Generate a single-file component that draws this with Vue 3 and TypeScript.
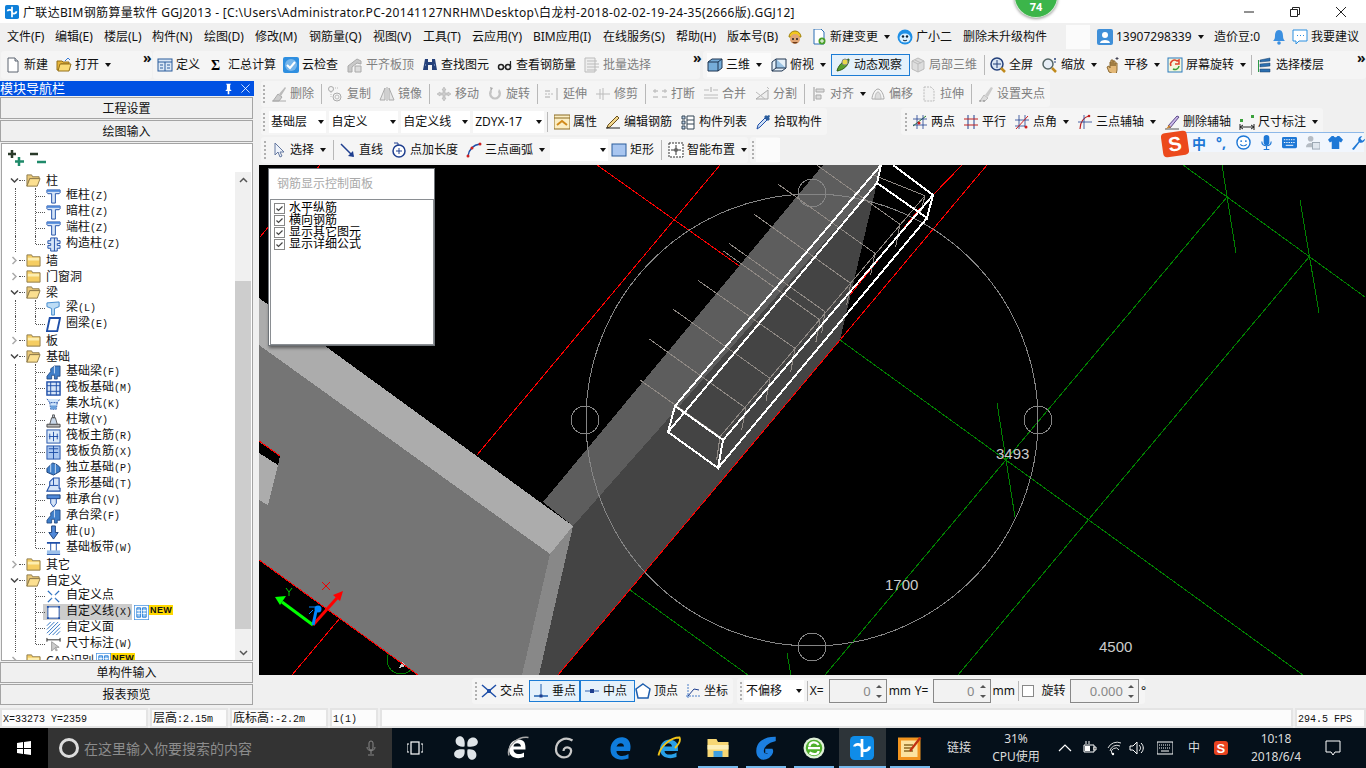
<script setup lang="ts">
import { h } from 'vue'

const icons: Record<string, string> = {
  app: '<rect x="0" y="0" width="16" height="16" rx="2" fill="#0f7fd8"/><path d="M8 2v12M3 7c0-2 5-2 5 1s5 2 5-1" fill="none" stroke="#fff" stroke-width="2"/>',
  newdoc: '<path d="M3 1h7l3 3v11H3z" fill="#fff" stroke="#5c6470"/><path d="M10 1v3h3" fill="#d8dde4" stroke="#5c6470"/>',
  open: '<path d="M1 4h5l1 1h6v2H5L3 13H1z" fill="#e6b53a" stroke="#94701a"/><path d="M4 7h11l-2 7H2z" fill="#fbdc76" stroke="#94701a"/><path d="M9 4l3-3 2 2" fill="none" stroke="#3a7bd5"/>',
  define: '<rect x="1" y="2" width="14" height="12" fill="#dce8f5" stroke="#2a5d9c"/><path d="M1 5h14M8 5v9M3 8h3M3 11h3M10 8h3M10 11h3" stroke="#2a5d9c"/>',
  sigma: '<text x="2" y="13" font-size="14" font-weight="700" font-family="Liberation Serif">Σ</text>',
  cloud: '<rect x="0" y="0" width="16" height="16" rx="2" fill="#2f8fe0"/><circle cx="8" cy="8" r="6" fill="#fff" opacity=".35"/><path d="M4 8l3 3 5-6" stroke="#fff" stroke-width="2" fill="none"/>',
  flush: '<path d="M1 9l9-7 4 2v3l-4-1-5 4v5H1z" fill="#c9c9c9" stroke="#aaa"/><path d="M8 9h6v6H8z" fill="#ddd" stroke="#aaa"/>',
  find: '<path d="M3 2h3v3h4V2h3l2 11h-5V8H6v5H1z" fill="#24407a"/><path d="M3 8h1M12 8h1" stroke="#9db8e0"/>',
  glasses: '<circle cx="4" cy="10" r="2.5" fill="none" stroke="#222" stroke-width="1.5"/><circle cx="11" cy="10" r="2.5" fill="none" stroke="#222" stroke-width="1.5"/><path d="M6 10h3M13.500 10V4" stroke="#222" stroke-width="1.2"/>',
  batch: '<path d="M1 1h10v14H1z" fill="#eee" stroke="#bbb"/><path d="M3 4h10M3 7h12M3 10h12M3 13h10" stroke="#bbb"/>',
  cube: '<path d="M1 5l4-3h10v9l-4 3H1z" fill="#76add9" stroke="#1f3550"/><path d="M1 5h10v9M11 5l4-3" fill="none" stroke="#1f3550"/>',
  topview: '<path d="M1 5l4-3h10v9l-4 3H1z" fill="#e6f0f8" stroke="#1f3550"/><path d="M5 2v9h10M5 11l-4 3" fill="#9cc3e3" stroke="#1f3550"/>',
  orbit: '<path d="M2 14C3 9 8 3 14 2c0 6-5 11-12 12z" fill="#5aa02c" stroke="#2c5a12"/><circle cx="10" cy="5" r="3" fill="#e8d84a" stroke="#888"/>',
  cube3: '<path d="M8 1l6 3v8l-6 3-6-3V4z" fill="#ddd" stroke="#bbb"/><path d="M2 4l6 3 6-3M8 7v8M5 3l6 3" fill="none" stroke="#bbb"/>',
  full: '<circle cx="7" cy="7" r="6" fill="#dbe7f5" stroke="#24407a" stroke-width="1.500"/><path d="M7 3v8M3 7h8" stroke="#24407a"/><path d="M11 11l4 4" stroke="#c08a1c" stroke-width="2.500"/>',
  zoom: '<circle cx="6" cy="7" r="5" fill="#e7eef7" stroke="#566" stroke-width="1.500"/><path d="M10 11l4 4" stroke="#c08a1c" stroke-width="2.500"/><path d="M12 2h2M13 1v2M12 5h2" stroke="#24407a"/>',
  pan: '<path d="M4 15l-2-5 2-1 1 2V5h1v4-6h2v6-5h2v5-3h2v7l-1 5z" fill="#e3b877" stroke="#8b6a34"/><path d="M12 0v3M10.500 1.500h3" stroke="#445"/>',
  rotate: '<rect x="1" y="1" width="14" height="14" fill="#f4f7dd" stroke="#2a7bbd"/><path d="M4 9a4 4 0 0 1 6-5l2-1v4H8" fill="none" stroke="#e0452a" stroke-width="1.500"/><path d="M12 9a4 4 0 0 1-6 3" fill="none" stroke="#35a035" stroke-width="1.500"/>',
  floors: '<path d="M3 3l10-2v3L3 5zM3 7l10-1v3L3 10zM3 12h10v3H3z" fill="#2b6fb0" stroke="#1a3f66" stroke-width=".5"/><path d="M1 3h1v12H1z" fill="#2e9a48"/>',
  del: '<path d="M2 15l5-7 4 3-3 4z" fill="#ccc" stroke="#aaa"/><path d="M8 8l6-7 1 1-5 8z" fill="#bbb"/><path d="M1 15h14" stroke="#aaa"/>',
  copy: '<circle cx="3" cy="3" r="2.500" fill="none" stroke="#aaa"/><circle cx="9" cy="11" r="4" fill="none" stroke="#aaa"/><circle cx="9" cy="11" r="2" fill="none" stroke="#bbb"/><path d="M5 2h6M3 6v5" stroke="#bbb" stroke-dasharray="1 1"/>',
  mirror: '<path d="M1 14L6 2v12zM15 14L10 2v12z" fill="#e6e6e6" stroke="#aaa"/><path d="M8 1v14" stroke="#aaa"/>',
  move: '<path d="M8 1l2 3H9v3h3V6l3 2-3 2V9H9v3h1l-2 3-2-3h1V9H4v1L1 8l3-2v1h3V4H6z" fill="#ccc" stroke="#aaa" stroke-width=".5"/>',
  rot2: '<path d="M4 3a6 6 0 1 0 8 0l-1 3a3.500 3.500 0 1 1-6 0z" fill="#c4c4c4"/><path d="M3 1l3 1-2 3z" fill="#aaa"/>',
  extend: '<path d="M1 8h8" stroke="#bbb" stroke-dasharray="2 1"/><path d="M13 2v12M1 5h5M1 11h5" stroke="#aaa"/>',
  trim: '<path d="M1 8h14M8 2v12M5 3v10" stroke="#bbb"/>',
  brk: '<path d="M1 5h5M10 5h5M1 11h5M10 11h5" stroke="#aaa"/><path d="M3 3v4M13 3v4" stroke="#bbb"/>',
  merge: '<path d="M1 4h5M10 4h5M1 12h14M1 9h14" stroke="#bbb"/><path d="M8 1v5" stroke="#aaa"/>',
  split: '<path d="M2 13h12V4L2 13z" fill="#eee" stroke="#aaa"/><path d="M2 6l9 7M13 1l2 2" stroke="#bbb"/>',
  align: '<path d="M3 1v14" stroke="#999"/><path d="M5 3h8v3H5zM5 9h5v4H5z" fill="#ddd" stroke="#aaa"/>',
  offset: '<path d="M2 13c0-4 3-10 6-10s6 6 6 10z" fill="none" stroke="#aaa"/><path d="M5 13c0-3 1-7 3-7s3 4 3 7z" fill="#ddd" stroke="#bbb"/>',
  stretch: '<path d="M3 1h7l3 3v11H3z" fill="#f3f3f3" stroke="#bbb" stroke-dasharray="2 1"/>',
  grip: '<path d="M2 15l4-6 4 3-3 3z" fill="#ddd" stroke="#bbb"/><path d="M7 9l6-8 2 1-5 9z" fill="#ccc"/><path d="M1 15h2M5 15h2" stroke="#888"/>',
  attr: '<rect x="0" y="1" width="16" height="14" fill="#fbeec4" stroke="#8a6a22"/><path d="M0 4h16" stroke="#8a6a22"/><path d="M3 11l5-4 5 4" fill="none" stroke="#d08a1c" stroke-width="2"/>',
  edit: '<path d="M3 11l9-9 2 2-9 9-3 1z" fill="#f2d68a" stroke="#6a5120"/><path d="M1 14h14" stroke="#222"/>',
  list: '<path d="M2 2h3v3H2zM2 7h3v3H2zM2 12h3v3H2z" fill="#bcd0e8" stroke="#345"/><path d="M7 2h7v13H7z" fill="#fff" stroke="#345"/><path d="M7 6h7M7 10h7" stroke="#345"/>',
  pick: '<path d="M2 15l1-4 7-7 2 2-7 7z" fill="#cfe0f5" stroke="#1f4fa8"/><path d="M9 3l2-2 1 1 2-1 1 1-1 2 1 1-2 2z" fill="#2a5d9c"/>',
  twop: '<path d="M1 12l13-10" stroke="#2a7d2a"/><path d="M5 1v14M11 1v14M1 5h14M1 11h14" stroke="#1f3f8f" stroke-width=".8"/><circle cx="7" cy="9" r="1.500" fill="#d02020"/>',
  para: '<path d="M5 1v14M11 1v14" stroke="#1f3f8f"/><path d="M1 5h14M1 11h14" stroke="#c02020"/>',
  angle: '<path d="M5 1v14M11 1v12M1 6h14M1 12h10" stroke="#1f3f8f" stroke-width=".8"/><path d="M2 15L14 2" stroke="#d02020"/><circle cx="12" cy="13" r="1.500" fill="#d02020"/>',
  arc3: '<path d="M3 15c0-7 4-12 9-13" fill="none" stroke="#c02020" stroke-width="1.200"/><path d="M7 1v14M1 8h14" stroke="#1f3f8f" stroke-width=".8"/><circle cx="12" cy="2" r="1.300" fill="#c02020"/>',
  delaxis: '<path d="M1 15h14" stroke="#555"/><path d="M4 12l9-10 2 1-9 11z" fill="#cbb7e8" stroke="#5b4a8a"/><path d="M2 15l3-4 2 2z" fill="#d0872a"/>',
  dim: '<path d="M1 13h14M1 10v6M15 10v6M4 11l-3 2 3 2M12 11l3 2-3 2" fill="none" stroke="#222"/><rect x="1" y="5" width="3" height="3" fill="#3aa03a"/><rect x="12" y="1" width="3" height="3" fill="#3aa03a"/>',
  arrow: '<path d="M4 1v12l3-3 2 5 2-1-2-4h4z" fill="#eef3fb" stroke="#6478a0"/>',
  line: '<path d="M1 2l12 12" stroke="#1f3f8f" stroke-width="1.500"/><path d="M14 15l-6-1 5-5z" fill="#1f3f8f"/>',
  ptlen: '<circle cx="8" cy="9" r="6" fill="#fff" stroke="#1f3f8f" stroke-width="1.500"/><path d="M8 6v6M5 9h6" stroke="#1f3f8f"/><path d="M3 1h4v3" fill="none" stroke="#1f3f8f"/>',
  arc: '<path d="M2 14C3 8 7 3 14 2" fill="none" stroke="#1f4fa8" stroke-width="1.500"/><circle cx="2" cy="14" r="1.500" fill="#d02020"/><circle cx="6" cy="6" r="1.500" fill="#d02020"/><circle cx="14" cy="2" r="1.500" fill="#d02020"/>',
  rect: '<rect x="1" y="2" width="14" height="12" fill="#a9c6f0" stroke="#2a5d9c"/>',
  smart: '<rect x="1" y="1" width="14" height="14" fill="#fff" stroke="#333" stroke-dasharray="2 1"/><path d="M8 3v10M3 8h10" stroke="#333"/><circle cx="8" cy="8" r="2" fill="#666"/>',
  worker: '<path d="M2 8a6 6 0 0 1 12 0z" fill="#f2c81e" stroke="#a0820c"/><circle cx="8" cy="10" r="5" fill="#e0a574"/><circle cx="6" cy="10" r="1" fill="#222"/><circle cx="10" cy="10" r="1" fill="#222"/><path d="M5 13c2 2 4 2 6 0" fill="#6a3a1a"/>',
  change: '<path d="M3 0h7l3 3v12H3z" fill="#fff" stroke="#2a6fb5"/><circle cx="11" cy="12" r="3.500" fill="#4aa02a"/><path d="M11 10v4M9 12h4" stroke="#fff"/>',
  bot: '<circle cx="8" cy="8" r="7.500" fill="#1e8fe6"/><ellipse cx="8" cy="9" rx="5.500" ry="4.500" fill="#d9f0ff"/><circle cx="6" cy="7.500" r="1.200" fill="#123"/><circle cx="10" cy="7.500" r="1.200" fill="#123"/><path d="M6 11c1 1 3 1 4 0" stroke="#123" fill="none"/>',
  user: '<rect x="0" y="0" width="16" height="16" rx="2" fill="#3f8fd8"/><circle cx="8" cy="6" r="3" fill="#fff"/><path d="M3 14c0-4 10-4 10 0z" fill="#fff"/>',
  bell: '<path d="M8 1c3 0 4 3 4 6s1 4 2 5H2c1-1 2-2 2-5s1-6 4-6z" fill="#3a8fe0"/><circle cx="8" cy="14" r="1.800" fill="#3a8fe0"/>',
  chat: '<path d="M1 1h14v11H7l-3 3v-3H1z" fill="#fff" stroke="#2a8fe0"/><path d="M5 6.500h1M8 6.500h1M11 6.500h1" stroke="#2a8fe0"/>',
  cross: '<path d="M1 2l14 12M15 2L1 14" stroke="#1f4fa8" stroke-width="1.500"/><rect x="6" y="6" width="4" height="4" fill="#1f4fa8"/>',
  perp: '<path d="M1 13h14" stroke="#1f5fae" stroke-width="1.500"/><path d="M8 1v13" stroke="#1f5fae"/><rect x="6.500" y="11.500" width="3" height="3" fill="#1f3f8f"/>',
  mid: '<path d="M1 8h14" stroke="#6a8fc8" stroke-width="1.500"/><rect x="6" y="6" width="4" height="4" fill="#1f3f8f"/>',
  vertex: '<path d="M8 1l7 5-2 9H3L1 6z" fill="#fff" stroke="#1f5fae" stroke-width="1.500"/>',
  coord: '<path d="M3 1v14M1 13h14" stroke="#4a7fc8" stroke-dasharray="2 1"/><path d="M3 13l6-7 5 1" fill="none" stroke="#1f3f8f"/>',
  fclosed: '<path d="M1 2h5l1 2h8v10H1z" fill="#f5cd62" stroke="#8e7a4a"/><path d="M2 5h12v3H2z" fill="#fdeeb0"/>',
  fopen: '<path d="M1 2h5l1 2h7v2H4l-3 8z" fill="#e9c878" stroke="#8e7a4a"/><path d="M4 6h11l-3 8H1z" fill="#fbdf90" stroke="#8e7a4a"/>',
  tcol: '<path d="M1 1h14v3l-1 1h-4v10H6V5H2L1 4z" fill="#d5e4f7" stroke="#1f4fa8"/><path d="M1 1h14v2H1z" fill="#4f88d8"/>',
  gzz: '<path d="M5 1h7v3h3v3h-3v2h3v3h-3v3H5v-3H2V9h3V7H2V4h3z" fill="#d5e4f7" stroke="#1f4fa8"/><path d="M9 1v14" stroke="#1f4fa8"/>',
  beam: '<path d="M1 2l13-1v5L9 8v7H6V8L1 6z" fill="#bcdcf5" stroke="#3f88cc"/>',
  ring: '<path d="M4 1h11l-3 14H1z" fill="#fff" stroke="#1f4fa8" stroke-width="2"/>',
  fbeam: '<path d="M1 15v-3l4-5V4l4-3h6v11h-3v3h-3v-4H6v4z" fill="#3f7ec8" stroke="#1a3f78" stroke-width=".8"/><path d="M9 1v8" stroke="#cfe0f5"/>',
  raft: '<rect x="1" y="1" width="14" height="14" fill="#d5e4f7" stroke="#1f4fa8" stroke-width="1.500"/><path d="M1 5h14M1 11h14M5 1v14M11 1v14" stroke="#1f4fa8"/>',
  pit: '<path d="M1 2l3 4h8l3-4M4 6l1 7h6l1-7" fill="#cfe4fa" stroke="#1f4fa8" stroke-dasharray="2 1"/><path d="M5 9h6v4H5z" fill="#6aa0dc"/>',
  pier: '<path d="M1 12h14v3H1z" fill="#bbb" stroke="#444"/><path d="M6 5h4l2 7H4zM7 2h2v3H7z" fill="#c9d8ea" stroke="#555"/>',
  rmain: '<rect x="1" y="1" width="14" height="14" fill="#dceaf9" stroke="#1f4fa8"/><path d="M8 3v10M3 8h10M4 5v6M12 5v6" stroke="#1f4fa8"/>',
  rneg: '<rect x="1" y="1" width="14" height="14" fill="#a9c6f0" stroke="#1f4fa8"/><path d="M3 4h10M3 8h10M8 1v14" stroke="#1f4fa8"/>',
  iso: '<path d="M1 8l6-6 5 2 3 3v4l-7 4-7-3z" fill="#3f7ec8" stroke="#1a3f78"/><path d="M5 3v9M10 3v10" stroke="#cfe0f5"/>',
  strip: '<path d="M1 15l3-6V5l4-4h6v11h1v3z" fill="#d5e4f7" stroke="#1f4fa8" stroke-width="1.200"/><path d="M4 9h9M8 1v8" stroke="#1f4fa8"/>',
  cap: '<path d="M1 2h14v4H1z" fill="#4f88d8" stroke="#1a3f78"/><path d="M5 6h6v5l-3 4-3-4z" fill="#d5e4f7" stroke="#1f4fa8"/>',
  pile: '<path d="M6 1h4v7h3l-5 7-5-7h3z" fill="#4f88d8" stroke="#1a3f78"/>',
  band: '<path d="M1 2h14M1 14h14" stroke="#1f4fa8" stroke-width="2"/><path d="M5 2v12M11 2v12" stroke="#1f4fa8"/><path d="M1 10h14v4H1z" fill="#9cc0ea"/>',
  cpoint: '<path d="M2 2l12 12M14 2L2 14" stroke="#2a6fc0" stroke-width="1.500"/><rect x="6" y="6" width="4" height="4" fill="#fff"/>',
  cline: '<rect x="2" y="2" width="12" height="12" fill="#fff" stroke="#1f4fa8"/><path d="M1 1h2v2H1zM13 1h2v2h-2zM1 13h2v2H1zM13 13h2v2h-2z" fill="#1f4fa8"/>',
  cface: '<path d="M1 5l4-4M1 9l8-8M1 13L13 1M3 15L15 3M7 15l8-8M11 15l4-4" stroke="#2a6fc0"/>',
  cdim: '<path d="M1 1v4M15 1v4M1 3h14" stroke="#222"/><path d="M6 5v10l3-3 2 3 1-1-2-3h4z" fill="#ccc" stroke="#999"/>',
  grid: '<rect x="0" y="0" width="16" height="16" fill="#fff" stroke="#3f8fe0" stroke-width="1.500"/><path d="M3 3h4v10H3zM9 3h4v10H9z" fill="#9cc8f2" stroke="#2a7fd8"/><path d="M3 6h4M3 9h4M9 6h4M9 9h4" stroke="#fff"/>',
  plus: '<path d="M4 0v8M0 4h8" stroke="#2a3a2a" stroke-width="2.500"/><path d="M11 7v9M7 11.500h9" stroke="#1f8a6a" stroke-width="2.500"/>',
  minus: '<path d="M0 4h8" stroke="#2a3a2a" stroke-width="2.500"/><path d="M7 12h9" stroke="#1f8a6a" stroke-width="2.500"/>',
  pin: '<path d="M5 2h6v1h-1v6l2 2H9v4H7v-4H4l2-2V3H5z" fill="#fff"/>',
  close: '<path d="M3 3l10 10M13 3L3 13" stroke="#fff" stroke-width="1"/>',
  win: '<path d="M1 3l6-1v6H1zM8 2l7-1v7H8zM1 9h6v5l-6-1zM8 9h7v6l-7-1z" fill="#fff"/>',
  mic: '<rect x="6" y="1" width="4" height="9" rx="2" fill="none" stroke="#888"/><path d="M4 7c0 5 8 5 8 0M8 11v3M5 15h6" fill="none" stroke="#888"/>',
  view: '<rect x="4" y="2" width="8" height="12" fill="none" stroke="#fff" stroke-width="1.200"/><path d="M2 4H0v8h2M14 4h2v8h-2" fill="none" stroke="#fff"/>',
  pinw: '<path d="M7 7C1 8 0 3 2 1s6-1 5 6zM9 7c-1-6 4-7 6-5s1 6-6 5zM9 9c6-1 7 4 5 6s-6 1-5-6zM7 9c1 6-4 7-6 5s-1-6 6-5z" fill="#dfe4e8"/>',
  ewhite: '<path d="M13 9H5c0 3 4 4 7 2v3c-5 2-10 0-10-5 0-6 6-8 9-6 2 1 2 4 2 6zM5 7h5c0-3-5-3-5 0z" fill="#fff"/><path d="M2 13C0 7 8 0 15 1" fill="none" stroke="#aaa"/>',
  spiral: '<path d="M13 3C8 0 2 3 2 9c0 4 4 6 7 5s4-5 2-6-4 0-4 2" fill="none" stroke="#c8c8c8" stroke-width="1.500"/>',
  edge: '<path d="M14 10H5c0 4 5 4 8 2v3C7 17 1 15 1 9 1 3 6 0 10 1c4 1 5 5 4 9zM5 7h5c0-3-4-3-5 0z" fill="#0f7cdc"/>',
  ie: '<path d="M14 10H5c0 3 5 3 8 1v3C8 16 2 14 2 9c0-5 5-8 9-6 3 1 3 4 3 7zM5 7h5c0-3-5-3-5 0z" fill="#28a0e8"/><path d="M1 13C2 7 9 1 15 1c1 2-1 5-3 7" fill="none" stroke="#f2c418" stroke-width="1.200"/>',
  folder: '<path d="M1 2h6l1 2h7v10H1z" fill="#f7d774"/><path d="M1 6h14v3H1z" fill="#fdf0b8"/><path d="M5 10h6v4H5z" fill="#3f9fe0"/>',
  gbue: '<path d="M14 1C6 1 2 5 2 10c0 4 3 6 6 5s5-4 4-6H8v2h2c0 2-4 2-4-1 0-3 3-6 8-7z" fill="#1c7fe0" stroke="#1c7fe0"/>',
  ggreen: '<circle cx="8" cy="8" r="7" fill="#dff0d8"/><circle cx="8" cy="8" r="5.500" fill="#4fb02c"/><path d="M4 8h8M5 11c3 2 6 1 6-1M11 6c-2-3-6-2-6 1" fill="none" stroke="#fff" stroke-width="1.500"/>',
  gapp: '<rect x="0" y="0" width="16" height="16" rx="3" fill="#0f8ce8"/><path d="M8 2v12M3 7c0-2 5-2 5 1s5 2 5-1" fill="none" stroke="#fff" stroke-width="1.800"/>',
  note: '<rect x="0" y="1" width="15" height="15" fill="#f2941e"/><rect x="2" y="3" width="11" height="11" fill="#fbe3a0"/><path d="M4 6h6M4 8h6M4 10h6" stroke="#8a6a22"/><path d="M8 10l7-9" stroke="#c03010" stroke-width="1.500"/>',
  up: '<path d="M2 11l6-6 6 6" fill="none" stroke="#fff" stroke-width="1.200"/>',
  batt: '<path d="M2 5h10v7H2z" fill="none" stroke="#fff"/><path d="M3 6h5v5H3z" fill="#fff"/><path d="M12 7h2v3h-2zM4 1v3M7 1v3" stroke="#fff"/>',
  wifi: '<path d="M1 8a10 10 0 0 1 13-5M3 11a7 7 0 0 1 10-5M5 14a4 4 0 0 1 7-4" fill="none" stroke="#ddd"/><circle cx="6" cy="14" r="1.200" fill="#fff"/>',
  vol: '<path d="M1 6h3l4-4v12l-4-4H1z" fill="none" stroke="#fff"/><path d="M10 5c2 2 2 4 0 6M12 3c3 3 3 7 0 10" fill="none" stroke="#fff"/>',
  kb: '<rect x="0" y="2" width="16" height="12" fill="none" stroke="#fff"/><path d="M2 5h12M2 8h12" stroke="#fff" stroke-dasharray="1 1"/><path d="M4 11h8" stroke="#fff"/>',
  sogou: '<rect x="1" y="1" width="14" height="14" rx="3" fill="#e8431f"/><text x="3.500" y="13" font-size="13" font-weight="700" fill="#fff" font-family="Liberation Sans">S</text>',
  notif: '<path d="M1 1h14v11h-5l-2 3-2-3H1z" fill="none" stroke="#fff"/>',
}

const Ico = (p: { name: string }) =>
  h('svg', { class: 'ic', viewBox: '0 0 16 16', innerHTML: icons[p.name] || '' })

type Tuple = [number, string, string, string?]
interface Bar { from: number; to: number; items: Tuple[] }

// renders bars of toolbar buttons, x values are page coordinates
const Tools = (p: { bars: Bar[]; origin: number }) => {
  let cur = p.origin
  return p.bars.map((b) => {
    const ml = b.from - cur
    cur = b.to
    const kids = b.items.map((it, n) => {
      const next = n + 1 < b.items.length ? b.items[n + 1][0] : b.to
      const fl = it[3] || ''
      const cls = ['tb']
      if (fl.includes('o')) cls.push('off')
      if (fl.includes('a')) cls.push('act')
      if (fl.includes('b')) cls.push('box')
      if (fl.includes('w')) cls.push('white')
      if (fl.includes('m')) cls.push('more')
      if (fl.includes('s')) cls.push('sep')
      if (fl.includes('k')) cls.push('dots')
      if (fl.includes('n')) cls.push('num')
      if (fl.includes('c')) cls.push('chk')
      const inner: any[] = []
      if (it[1]) inner.push(h(Ico, { name: it[1] }))
      if (it[2]) inner.push(h('span', { class: 'tx' }, it[2]))
      if (fl.includes('d')) inner.push(h('i', { class: 'dd' }))
      if (fl.includes('n')) inner.push(h('i', { class: 'spin' }, [h('b', { class: 'su' }), h('b', { class: 'sd' })]))
      return h('div', { class: cls, style: { width: next - it[0] + 'px' } }, inner)
    })
    const pad = b.items.length ? b.items[0][0] - b.from : 0
    return h('div', { class: 'bar', style: { marginLeft: ml + 'px', width: b.to - b.from + 'px', paddingLeft: pad + 'px' } }, kids)
  })
}

const menuBars: Bar[] = [
  {
    from: 0, to: 1062, items: [
      [7, '', '文件(F)'], [55, '', '编辑(E)'], [104, '', '楼层(L)'], [152, '', '构件(N)'], [204, '', '绘图(D)'],
      [255, '', '修改(M)'], [309, '', '钢筋量(Q)'], [373, '', '视图(V)'], [423, '', '工具(T)'], [472, '', '云应用(Y)'],
      [533, '', 'BIM应用(I)'], [603, '', '在线服务(S)'], [676, '', '帮助(H)'], [727, '', '版本号(B)'],
      [787, 'worker', ''], [811, 'change', '新建变更', 'd'], [897, 'bot', '广小二'], [963, '', '删除未升级构件'],
    ],
  },
  { from: 1066, to: 1090, items: [[1066, '', '', 'w']] },
  {
    from: 1092, to: 1366, items: [
      [1097, 'user', '13907298339', 'd'], [1214, '', '造价豆:0'], [1271, 'bell', ''], [1292, 'chat', '我要建议'],
    ],
  },
]

const row1: Bar[] = [
  { from: 1, to: 152, items: [[5, 'newdoc', '新建'], [56, 'open', '打开', 'd'], [143, '', '»', 'm']] },
  {
    from: 153, to: 700, items: [
      [157, 'define', '定义'], [209, 'sigma', '汇总计算'], [283, 'cloud', '云检查'], [347, 'flush', '平齐板顶', 'o'],
      [422, 'find', '查找图元'], [497, 'glasses', '查看钢筋量'], [584, 'batch', '批量选择', 'o'], [693, '', '»', 'm'],
    ],
  },
  {
    from: 703, to: 1366, items: [
      [707, 'cube', '三维', 'dw'], [771, 'topview', '俯视', 'd'], [831, 'orbit', '动态观察', 'a'], [910, 'cube3', '局部三维', 'o'],
      [984, '', '', 's'], [990, 'full', '全屏'], [1042, 'zoom', '缩放', 'd'], [1105, 'pan', '平移', 'd'],
      [1167, 'rotate', '屏幕旋转', 'd'], [1251, '', '', 's'], [1257, 'floors', '选择楼层'], [1357, '', '»', 'm'],
    ],
  },
]

const row2: Bar[] = [
  {
    from: 261, to: 1050, items: [
      [263, '', '', 'k'], [271, 'del', '删除', 'o'], [321, '', '', 's'], [328, 'copy', '复制', 'o'], [379, 'mirror', '镜像', 'o'],
      [429, '', '', 's'], [436, 'move', '移动', 'o'], [487, 'rot2', '旋转', 'o'], [537, '', '', 's'], [544, 'extend', '延伸', 'o'],
      [595, 'trim', '修剪', 'o'], [645, '', '', 's'], [652, 'brk', '打断', 'o'], [703, 'merge', '合并', 'o'], [754, 'split', '分割', 'o'],
      [804, '', '', 's'], [811, 'align', '对齐', 'do'], [870, 'offset', '偏移', 'o'], [921, 'stretch', '拉伸', 'o'], [971, '', '', 's'],
      [978, 'grip', '设置夹点', 'o'],
    ],
  },
]

const row3: Bar[] = [
  {
    from: 261, to: 827, items: [
      [263, '', '', 'k'], [269, '', '基础层', 'bd'], [329, '', '自定义', 'bd'], [401, '', '自定义线', 'bd'], [473, '', 'ZDYX-17', 'bd'],
      [547, '', '', 's'], [554, 'attr', '属性'], [605, 'edit', '编辑钢筋'], [680, 'list', '构件列表'], [755, 'pick', '拾取构件'],
    ],
  },
  {
    from: 901, to: 1323, items: [
      [905, '', '', 'k'], [912, 'twop', '两点'], [963, 'para', '平行'], [1014, 'angle', '点角', 'd'], [1077, 'arc3', '三点辅轴', 'd'],
      [1164, 'delaxis', '删除辅轴'], [1239, 'dim', '尺寸标注', 'd'],
    ],
  },
]

const row4: Bar[] = [
  {
    from: 261, to: 748, items: [
      [264, '', '', 'k'], [271, 'arrow', '选择', 'd'], [333, '', '', 's'], [340, 'line', '直线'], [391, 'ptlen', '点加长度'],
      [466, 'arc', '三点画弧', 'd'], [550, '', '', 'bd'], [611, 'rect', '矩形'], [661, '', '', 's'], [668, 'smart', '智能布置', 'd'],
    ],
  },
  { from: 750, to: 780, items: [[752, '', '', 'k'], [756, '', '', 'w']] },
]

const snap: Bar[] = [
  {
    from: 472, to: 733, items: [
      [475, '', '', 'k'], [481, 'cross', '交点'], [529, 'perp', '垂点', 'a'], [580, 'mid', '中点', 'a'], [635, 'vertex', '顶点'], [685, 'coord', '坐标'],
    ],
  },
  {
    from: 737, to: 1145, items: [
      [740, '', '', 'k'], [744, '', '不偏移', 'bd'], [806, '', '', 's'], [809, '', 'X='], [828, '', '0', 'n'], [888, '', 'mm'], [914, '', 'Y='],
      [932, '', '0', 'n'], [992, '', 'mm'], [1017, '', '', 's'], [1021, '', '', 'c'], [1041, '', '旋转'], [1069, '', '0.000', 'n'], [1141, '', '°'],
    ],
  },
]

interface Row { label: string; code?: string; icon?: string; open?: boolean; folder?: boolean; last?: boolean; sel?: boolean; isNew?: boolean }
const f = (label: string, open = false, isNew = false): Row => ({ label, folder: true, open, isNew })
const c = (label: string, code: string, icon: string, last = false): Row => ({ label, code, icon, last })

const tree: Row[] = [
  f('柱', true), c('框柱', '(Z)', 'tcol'), c('暗柱', '(Z)', 'tcol'), c('端柱', '(Z)', 'tcol'), c('构造柱', '(Z)', 'gzz', true),
  f('墙'), f('门窗洞'), f('梁', true), c('梁', '(L)', 'beam'), c('圈梁', '(E)', 'ring', true), f('板'), f('基础', true),
  c('基础梁', '(F)', 'fbeam'), c('筏板基础', '(M)', 'raft'), c('集水坑', '(K)', 'pit'), c('柱墩', '(Y)', 'pier'),
  c('筏板主筋', '(R)', 'rmain'), c('筏板负筋', '(X)', 'rneg'), c('独立基础', '(P)', 'iso'), c('条形基础', '(T)', 'strip'),
  c('桩承台', '(V)', 'cap'), c('承台梁', '(F)', 'fbeam'), c('桩', '(U)', 'pile'), c('基础板带', '(W)', 'band', true),
  f('其它'), f('自定义', true), c('自定义点', '', 'cpoint'),
  { label: '自定义线', code: '(X)', icon: 'cline', sel: true, isNew: true },
  c('自定义面', '', 'cface'), c('尺寸标注', '(W)', 'cdim', true), f('CAD识别', false, true),
]

const checks = ['水平纵筋', '横向钢筋', '显示其它图元', '显示详细公式']

// zoomed coordinates of the rebar ticks, origin 640,165 at 3x
const z = (x: number, y: number) => `${640 + x / 3},${165 + y / 3}`
const rebar: number[][] = [
  [0, 645, 240, 815], [28, 522, 318, 730], [100, 433, 390, 640], [175, 347, 465, 550], [250, 258, 540, 465], [268, 236, 555, 440],
  [343, 148, 632, 355], [415, 58, 705, 265], [530, 0, 780, 178], [700, 30, 855, 92], [240, 815, 855, 92],
  [240, 815, 230, 885], [318, 730, 305, 795], [390, 640, 378, 708], [465, 550, 452, 620], [555, 440, 545, 505], [540, 465, 528, 530],
  [632, 355, 620, 420], [705, 265, 692, 330], [780, 178, 767, 245], [855, 92, 840, 150],
]
const rebarPaths = rebar.map((r) => `M${z(r[0], r[1])}L${z(r[2], r[3])}`).join('')

const box = [
  '675,406 881,165', '668,432 877,183', '718,468 927,218', '723,440 933,195', '675,406 723,440 718,468 668,432 675,406',
  '877,183 927,218 933,195 893,165', '881,165 877,183',
]

const green = [
  '840,340 1303,675', '1183,165 1365,297', '1227,197 825,675', '1309,257 958,675', '1222,165 1236,253', '1300,200 1319,313',
  '997,403 1015,517', '630,590 748,675', '787,653 791,675',
]

const task = [
  { c: 415, w: 48, i: 'view' }, { c: 466, w: 48, i: 'pinw', big: true }, { c: 518, w: 48, i: 'ewhite', big: true }, { c: 565, w: 46, i: 'spiral', big: true },
  { c: 621, w: 48, i: 'edge', big: true }, { c: 669, w: 48, i: 'ie', big: true }, { c: 718, w: 48, i: 'folder', big: true, on: true },
  { c: 766, w: 48, i: 'gbue', big: true, on: true }, { c: 814, w: 48, i: 'ggreen', big: true, on: true }, { c: 862, w: 47, i: 'gapp', big: true, on: true, cur: true },
  { c: 910, w: 48, i: 'note', big: true, on: true },
  { c: 959, w: 30, lines: ['链接'] }, { c: 1016, w: 64, lines: ['31%', 'CPU使用'] }, { c: 1065, w: 16, i: 'up' }, { c: 1090, w: 20, i: 'batt' },
  { c: 1115, w: 20, i: 'wifi' }, { c: 1137, w: 18, i: 'vol' }, { c: 1165, w: 24, i: 'kb' }, { c: 1194, w: 16, lines: ['中'] }, { c: 1221, w: 18, i: 'sogou' },
  { c: 1276, w: 58, lines: ['10:18', '2018/6/4'] }, { c: 1333, w: 24, i: 'notif' },
]
const taskCells = task.map((t, n) => {
  const prev = n ? task[n - 1].c + task[n - 1].w / 2 : 392
  return { ...t, ml: t.c - t.w / 2 - prev }
})

const status = [
  { w: 148, a: 'X=33273 Y=2359', b: '' }, { w: 78, a: '层高', b: ':2.15m' }, { w: 98, a: '底标高', b: ':-2.2m' }, { w: 48, a: '', b: '1(1)' },
]
</script>

<template>
  <div class="app">
    <header class="title">
      <Ico name="app" class="app-ic" />
      <span class="title-text">广联达BIM钢筋算量软件 GGJ2013 - [C:\Users\Administrator.PC-20141127NRHM\Desktop\白龙村-2018-02-02-19-24-35(2666版).GGJ12]</span>
      <div class="winbtns">
        <svg viewBox="0 0 12 12"><path d="M1 6h10" stroke="#222" /></svg>
        <svg viewBox="0 0 12 12"><path d="M1.500 3.500h7v7h-7zM3.500 3.500v-2h7v7h-2" fill="none" stroke="#222" /></svg>
        <svg viewBox="0 0 12 12"><path d="M1 1l10 10M11 1L1 11" stroke="#222" /></svg>
      </div>
    </header>
    <div class="badge">74</div>

    <div class="tool-row menu"><Tools :bars="menuBars" :origin="0" /></div>
    <div class="tool-row first"><Tools :bars="row1" :origin="0" /></div>

    <div class="main">
      <aside class="nav">
        <div class="nav-head">
          <span>模块导航栏</span>
          <Ico name="pin" class="head-ic" />
          <Ico name="close" class="head-ic" />
        </div>
        <div class="nav-btn">工程设置</div>
        <div class="nav-btn">绘图输入</div>
        <div class="tree-panel">
          <div class="tree-top">
            <Ico name="plus" />
            <Ico name="minus" />
          </div>
          <div class="tree-wrap">
            <div class="tree">
              <div v-for="r in tree" :key="r.label + r.code" class="row" :class="{ kid: !r.folder, last: r.last }">
                <template v-if="r.folder">
                  <svg class="chev" viewBox="0 0 9 9">
                    <path v-if="r.open" d="M1 2.500l3.500 3.500 3.500-3.500" fill="none" stroke="#444" stroke-width="1.500" />
                    <path v-else d="M2.500 1l3.500 3.500-3.500 3.500" fill="none" stroke="#aaa" stroke-width="1.500" />
                  </svg>
                  <i class="stub"></i>
                  <Ico :name="r.open ? 'fopen' : 'fclosed'" />
                  <span class="label">{{ r.label }}</span>
                </template>
                <template v-else>
                  <i class="branch"></i>
                  <span class="pick" :class="{ sel: r.sel }">
                    <Ico :name="r.icon!" />
                    <span class="label">{{ r.label }}<span class="code">{{ r.code }}</span></span>
                  </span>
                </template>
                <template v-if="r.isNew">
                  <Ico name="grid" class="grid-ic" />
                  <span class="new">NEW</span>
                </template>
              </div>
            </div>
            <div class="scroll">
              <svg class="sarrow" viewBox="0 0 9 9"><path d="M1 6l3.500-3.500 3.500 3.500" fill="none" stroke="#555" stroke-width="1.500" /></svg>
              <div class="thumb"></div>
              <svg class="sarrow" viewBox="0 0 9 9"><path d="M1 3l3.500 3.500 3.500-3.500" fill="none" stroke="#555" stroke-width="1.500" /></svg>
            </div>
          </div>
        </div>
        <div class="nav-btn lower">单构件输入</div>
        <div class="nav-btn lower">报表预览</div>
      </aside>

      <section class="work">
        <div class="tool-row r2"><Tools :bars="row2" :origin="259" /></div>
        <div class="tool-row r3"><Tools :bars="row3" :origin="259" /></div>
        <div class="tool-row r4"><Tools :bars="row4" :origin="259" /></div>

        <div class="canvas">
          <svg class="cad" viewBox="259 165 1107 510" shape-rendering="crispEdges">
            <polyline v-for="g in green" :key="g" :points="g" stroke="#008000" fill="none" />
            <circle cx="401" cy="660" r="14" stroke="#008000" fill="none" />
            <g stroke="#f00" fill="none">
              <path d="M260 237L320 165M597 165L745 270M720 165L477 455M340 618L292 675M987 165L840 340" />
            </g>
            <polygon points="823,165 881,165 877,183 573,526 543,502" fill="#5d5d5d" />
            <polygon points="877,183 840,340 558,675 539,675 573,526" fill="#444" />
            <polygon points="259,298 573,526 550,554 259,345" fill="#acacac" />
            <polygon points="259,345 550,554 522,675 418,675 259,560" fill="#757575" />
            <polygon points="550,554 573,526 539,675 522,675" fill="#888" />
            <polygon points="259,442 280,456 278,465 259,453" fill="#000" />
            <polygon points="259,453 278,465 268,505 259,500" fill="#acacac" />
            <polygon points="402,662 406,666 399,668" fill="#ccc" />
            <g stroke="#f00" fill="none">
              <path d="M259 441L280 456M259 560L418 675M840 340L558 675M962 165L933 195M920 208L850 295" />
            </g>
            <circle cx="812" cy="420" r="226" fill="none" stroke="#858585" />
            <g fill="none" stroke="#858585">
              <circle cx="812" cy="193" r="14" />
              <circle cx="1038" cy="420" r="14" />
              <circle cx="812" cy="647" r="14" />
              <circle cx="585" cy="420" r="14" />
            </g>
            <path :d="rebarPaths" stroke="#8f8984" fill="none" />
            <polyline v-for="l in box" :key="l" :points="l" stroke="#fff" stroke-width="2" fill="none" />
            <g class="dims">
              <text x="996" y="459">3493</text>
              <text x="885" y="590">1700</text>
              <text x="1099" y="652">4500</text>
            </g>
            <g shape-rendering="auto">
              <path d="M313 625L282 602" stroke="#0f0" stroke-width="3" />
              <path d="M275 597l11-1-6 9z" fill="#0f0" />
              <path d="M313 625l24-27" stroke="#f00" stroke-width="3" />
              <path d="M343 591l-10 4 7 6z" fill="#f00" />
              <path d="M313 625l3-14" stroke="#08f" stroke-width="3" />
              <circle cx="318" cy="609" r="3.500" fill="#08f" />
              <path d="M309 607h7M309 614l4-4" stroke="#08f" />
              <path d="M286 588l3 4 3-4M289 592v4" stroke="#0c0" fill="none" />
              <path d="M322 582l8 8M330 582l-8 8" stroke="#e00" fill="none" />
            </g>
          </svg>

          <div class="rebar-panel">
            <div class="rp-title">钢筋显示控制面板</div>
            <div class="rp-list">
              <label v-for="k in checks" :key="k" class="rp-row">
                <svg viewBox="0 0 11 11"><rect x=".5" y=".5" width="10" height="10" fill="#fff" stroke="#888" /><path d="M2.500 5.500l2 2 4-4" fill="none" stroke="#444" stroke-width="1.200" /></svg>
                <span>{{ k }}</span>
              </label>
            </div>
          </div>
        </div>

        <div class="tool-row snap"><Tools :bars="snap" :origin="259" /></div>
      </section>
    </div>

    <div class="status">
      <div v-for="s in status" :key="s.a + s.b" class="cell" :style="{ width: s.w + 'px' }">
        <span class="cjk">{{ s.a.startsWith('X') ? '' : s.a }}</span><span class="code">{{ s.a.startsWith('X') ? s.a : s.b }}</span>
      </div>
      <div class="cell grow"></div>
      <div class="cell fps"><span class="code">294.5 FPS</span></div>
    </div>

    <footer class="taskbar">
      <div class="start"><Ico name="win" /></div>
      <div class="search">
        <i class="ring"></i>
        <span>在这里输入你要搜索的内容</span>
        <Ico name="mic" />
      </div>
      <div
        v-for="t in taskCells"
        :key="t.c"
        class="tcell"
        :class="{ on: t.on, cur: t.cur, big: t.big }"
        :style="{ width: t.w + 'px', marginLeft: t.ml + 'px' }"
      >
        <Ico v-if="t.i" :name="t.i" />
        <span v-for="l in t.lines" :key="l">{{ l }}</span>
      </div>
    </footer>

    <div class="sogou">
      <div class="sg-logo">S</div>
      <div class="sg-bar">
        <span class="sg-zh">中</span>
        <span class="sg-p">°,</span>
        <svg viewBox="0 0 16 16"><circle cx="8" cy="8" r="7" fill="#fff" stroke="#1e78d6" stroke-width="1.500" /><circle cx="5.500" cy="6.500" r="1" fill="#1e78d6" /><circle cx="10.500" cy="6.500" r="1" fill="#1e78d6" /><path d="M4.500 10c2 2 5 2 7 0" fill="none" stroke="#1e78d6" stroke-width="1.200" /></svg>
        <svg viewBox="0 0 16 16"><rect x="5" y="0" width="6" height="11" rx="3" fill="#1e78d6" /><path d="M3 7c0 6 10 6 10 0M8 12v3M5 15.500h6" fill="none" stroke="#1e78d6" stroke-width="1.200" /></svg>
        <svg viewBox="0 0 16 16"><rect x="0" y="2" width="16" height="12" rx="1.500" fill="#1e78d6" /><path d="M2 5h12M2 8h12" stroke="#fff" stroke-dasharray="1.500 1" /><path d="M4 11h8" stroke="#fff" /></svg>
        <svg viewBox="0 0 16 16"><circle cx="6" cy="4" r="3" fill="#b5bcc4" /><path d="M1 13c0-6 10-6 10 0z" fill="#b5bcc4" /><rect x="8" y="8" width="8" height="7" fill="#dfe6ee" stroke="#9aa6b2" /></svg>
        <svg viewBox="0 0 16 16"><path d="M4 1h2c1 2 3 2 4 0h2l4 4-2 3-2-1v8H4V7L2 8 0 5z" fill="#1e78d6" /></svg>
        <svg viewBox="0 0 16 16"><path d="M1 15l7-8c-1-3 1-6 4-6l-2 3 2 2 3-2c0 3-3 5-6 4l-6 8z" fill="#1e78d6" /></svg>
      </div>
    </div>
  </div>
</template>

<style>
html, body { margin: 0; background: #f0f0f0; overflow: hidden; }
.bar { display: flex; align-items: center; height: 100%; background: #f5f5f5; border-radius: 3px; box-sizing: border-box; flex: none; }
.tb { display: flex; align-items: center; height: 22px; flex: none; box-sizing: border-box; font-size: 12px; color: #111; white-space: nowrap; }
.ic { width: 16px; height: 16px; flex: none; display: block; }
.tb .ic + .tx { margin-left: 3px; }
.tb .tx { line-height: 16px; }
.tb .dd { width: 0; height: 0; border: 3px solid transparent; border-top: 4px solid #111; border-bottom: 0; margin-left: 6px; flex: none; }
.tb.off { color: #808080; }
.tb.act { border: 1px solid #1c7cd5; background: #e5f1fb; padding-left: 3px; margin-left: 0; }
.tb.box { background: #fff; padding-left: 2px; margin-right: 3px; max-width: 100%; flex-shrink: 1; }
.tb.box .dd { margin-left: auto; margin-right: 2px; }
.tb.white { background: #fbfbfb; height: 24px; }
.tb.more { font-size: 14px; font-weight: 700; align-self: flex-start; height: 14px; line-height: 14px; }
.tb.sep::before { content: ""; width: 1px; height: 20px; background: #b8b8b8; }
.tb.dots::before { content: ""; width: 2px; height: 18px; background: repeating-linear-gradient(#b0b0b0 0 2px, transparent 2px 4px); }
.tb.num { border: 1px solid #888; height: 24px; background: #f2f2f2; justify-content: flex-end; color: #888; margin-right: 2px; flex-shrink: 1; padding-right: 3px; }
.tb.num .tx { margin-right: 5px; font-size: 13px; }
.tb .spin { display: flex; flex-direction: column; gap: 7px; width: 7px; }
.tb .su { width: 0; height: 0; border: 3px solid transparent; border-bottom: 3px solid #555; border-top: 0; }
.tb .sd { width: 0; height: 0; border: 3px solid transparent; border-top: 3px solid #555; border-bottom: 0; }
.tb.chk::before { content: ""; width: 10px; height: 10px; border: 1px solid #888; background: #fff; }
</style>

<style scoped>
.app {
  width: 1366px;
  height: 768px;
  position: relative;
  overflow: hidden;
  background: #f0f0f0;
  font-family: "Noto Sans", "Noto Sans CJK SC", sans-serif;
  font-size: 12px;
  color: #111;
  display: flex;
  flex-direction: column;
}
.title {
  height: 23px;
  background: #fff;
  display: flex;
  align-items: center;
  padding-left: 5px;
  flex: none;
}
.app-ic { width: 14px; height: 14px; margin-right: 4px; }
.title-text { font-size: 12px; white-space: nowrap; letter-spacing: 0.33px; }
.winbtns { margin-left: auto; display: flex; gap: 34px; padding-right: 19px; }
.winbtns svg { width: 12px; height: 12px; }
.badge {
  position: absolute;
  left: 1014px;
  top: -25px;
  width: 42px;
  height: 42px;
  border-radius: 50%;
  background: #3cb54a;
  border: 1px solid #d8e8d8;
  box-shadow: 0 1px 3px #0006;
  color: #fff;
  font-size: 11px;
  font-weight: 700;
  display: flex;
  align-items: flex-end;
  justify-content: center;
  padding-bottom: 3px;
  box-sizing: content-box;
  height: 38px;
}
.tool-row { display: flex; flex: none; }
.menu { height: 28px; }
.menu :deep(.bar) { background: #f0f0f0; }
.first { height: 30px; padding-bottom: 2px; box-sizing: border-box; }
.main { height: 627px; display: flex; flex: none; }
.nav { width: 254px; margin-right: 5px; flex: none; display: flex; flex-direction: column; }
.nav-head {
  height: 15px;
  background: #0051e3;
  color: #fff;
  font-size: 13px;
  display: flex;
  align-items: center;
  gap: 4px;
  padding-right: 2px;
  line-height: 15px;
  margin-bottom: 1px;
}
.nav-head span { margin-right: auto; }
.head-ic { width: 13px; height: 13px; }
.nav-btn {
  height: 22px;
  flex: none;
  box-sizing: border-box;
  border: 1px solid #a4a4a4;
  background: #f0f0f0;
  text-align: center;
  line-height: 21px;
  font-size: 12px;
  margin: 0 1px 1px 0;
}
.nav-btn.lower { height: 21px; margin-top: 1px; margin-bottom: 0; line-height: 20px; }
.tree-panel {
  height: 518px;
  flex: none;
  box-sizing: border-box;
  border: 1px solid #a4a4a4;
  margin: 0 1px 0 1px;
  background: #fff;
  display: flex;
  flex-direction: column;
}
.tree-top { height: 28px; flex: none; display: flex; gap: 6px; padding: 6px 0 0 6px; box-sizing: border-box; }
.tree-wrap { display: flex; flex: 1; min-height: 0; }
.tree { flex: none; width: 233px; overflow: hidden; }
.row { height: 16px; display: flex; align-items: center; position: relative; padding: 1px 0 0 8px; white-space: nowrap; box-sizing: border-box; }
.row .ic { width: 15px; height: 15px; }
.chev { width: 9px; height: 9px; flex: none; }
.stub { width: 6px; height: 0; border-top: 1px dotted #555; margin: 0 1px 0 0; flex: none; }
.label { margin-left: 5px; line-height: 16px; font-size: 12px; }
.pick { display: flex; align-items: center; height: 16px; margin-top: -1px; }
.pick.sel { background: #ccc; margin-left: -3px; padding-left: 3px; }
.code { font-family: "Liberation Mono", monospace; font-size: 10px; }
.kid { padding-left: 44px; }
.kid::before {
  content: "";
  position: absolute;
  left: 13px;
  top: 0;
  bottom: 0;
  border-left: 1px dotted #555;
}
.kid::after {
  content: "";
  position: absolute;
  left: 33px;
  top: 0;
  bottom: 0;
  border-left: 1px dotted #555;
}
.kid.last::after { bottom: 8px; }
.branch { position: absolute; left: 34px; top: 8px; width: 9px; border-top: 1px dotted #555; }
.grid-ic { margin-left: 2px; }
.new {
  background: #ffd800;
  font-family: "Liberation Sans", sans-serif;
  font-size: 9px;
  font-weight: 700;
  line-height: 10px;
  padding: 0 1px;
  align-self: flex-start;
  letter-spacing: 0.4px;
}
.scroll {
  width: 16px;
  flex: none;
  background: #f0f0f0;
  display: flex;
  flex-direction: column;
  align-items: center;
}
.sarrow { width: 9px; height: 9px; margin: 4px 0; flex: none; }
.thumb { width: 100%; background: #cdcdcd; height: 348px; margin-top: 92px; margin-bottom: 15px; flex: none; }

.work { flex: 1; min-width: 0; display: flex; flex-direction: column; }
.r2 { height: 26px; margin-bottom: 1px; }
.r3 { height: 27px; margin-bottom: 2px; }
.r4 { height: 26px; margin-bottom: 2px; }
.canvas { height: 510px; background: #000; position: relative; overflow: hidden; flex: none; }
.cad { display: block; width: 1107px; height: 510px; }
.dims text { fill: #ccc; font-family: "Liberation Sans", sans-serif; font-size: 15px; }
.rebar-panel {
  position: absolute;
  left: 9px;
  top: 3px;
  width: 167px;
  height: 178px;
  box-sizing: border-box;
  border: 1px solid #6e7378;
  background: #fff;
  box-shadow: 1px 2px 3px #0007;
  display: flex;
  flex-direction: column;
}
.rp-title { height: 30px; line-height: 29px; padding-left: 8px; color: #aaa; font-size: 12px; flex: none; }
.rp-list { flex: 1; border: 1px solid #8a8e92; margin: 0 0 0 1px; padding: 2px 0 0 3px; }
.rp-row { display: flex; align-items: center; height: 12px; gap: 4px; color: #000; }
.rp-row svg { width: 11px; height: 11px; flex: none; }
.rp-row span { line-height: 12px; font-size: 12px; }
.snap { height: 26px; margin-top: 3px; }

.status { height: 20px; flex: none; display: flex; gap: 2px; }
.cell {
  box-sizing: border-box;
  border: 2px solid #e4e4e4;
  background: #fcfcfc;
  height: 20px;
  line-height: 16px;
  padding-left: 1px;
  flex: none;
  overflow: hidden;
  white-space: nowrap;
}
.cell.grow { flex: 1; }
.cell.fps { width: 71px; }
.cjk { font-size: 12px; }
.taskbar { height: 40px; flex: none; background: #05101a; display: flex; align-items: center; color: #ddd; }
.start { width: 48px; height: 40px; background: #000; display: flex; align-items: center; justify-content: center; flex: none; }
.search {
  width: 344px;
  height: 40px;
  background: #333;
  color: #8c8c8c;
  font-size: 14px;
  display: flex;
  align-items: center;
  box-sizing: border-box;
  padding-left: 11px;
  flex: none;
}
.ring { width: 14px; height: 14px; border: 3px solid #ddd; border-radius: 50%; margin-right: 5px; }
.search .ic { margin-left: auto; margin-right: 13px; }
.tcell {
  height: 40px;
  flex: none;
  display: flex;
  flex-direction: column;
  align-items: center;
  justify-content: center;
  position: relative;
  font-size: 12px;
  line-height: 18px;
  white-space: nowrap;
  box-sizing: border-box;
}
.tcell.big .ic { width: 24px; height: 24px; }
.tcell.on::after {
  content: "";
  position: absolute;
  left: 4px;
  right: 4px;
  bottom: 0;
  height: 2px;
  background: #76b9ed;
}
.tcell.cur { background: #2d3439; }
.tcell.cur::after { left: 0; right: 0; }
.sogou { position: absolute; left: 1162px; top: 132px; display: flex; align-items: flex-start; }
.sg-logo {
  width: 26px;
  height: 24px;
  background: #ec4a1c;
  border-radius: 4px;
  color: #fff;
  font-family: "Liberation Sans", sans-serif;
  font-weight: 700;
  font-size: 20px;
  text-align: center;
  line-height: 24px;
  transform: rotate(-8deg);
  z-index: 1;
}
.sg-bar {
  width: 178px;
  height: 20px;
  margin-left: -2px;
  background: #f1f6fd;
  border-top: 1px solid #8db8e8;
  display: flex;
  align-items: center;
  gap: 8px;
  padding-left: 6px;
  box-sizing: border-box;
  color: #1e78d6;
  font-weight: 700;
  font-size: 14px;
}
.sg-bar svg { width: 15px; height: 15px; flex: none; }
.sg-zh, .sg-p { width: 14px; margin-right: 2px; }
</style>
